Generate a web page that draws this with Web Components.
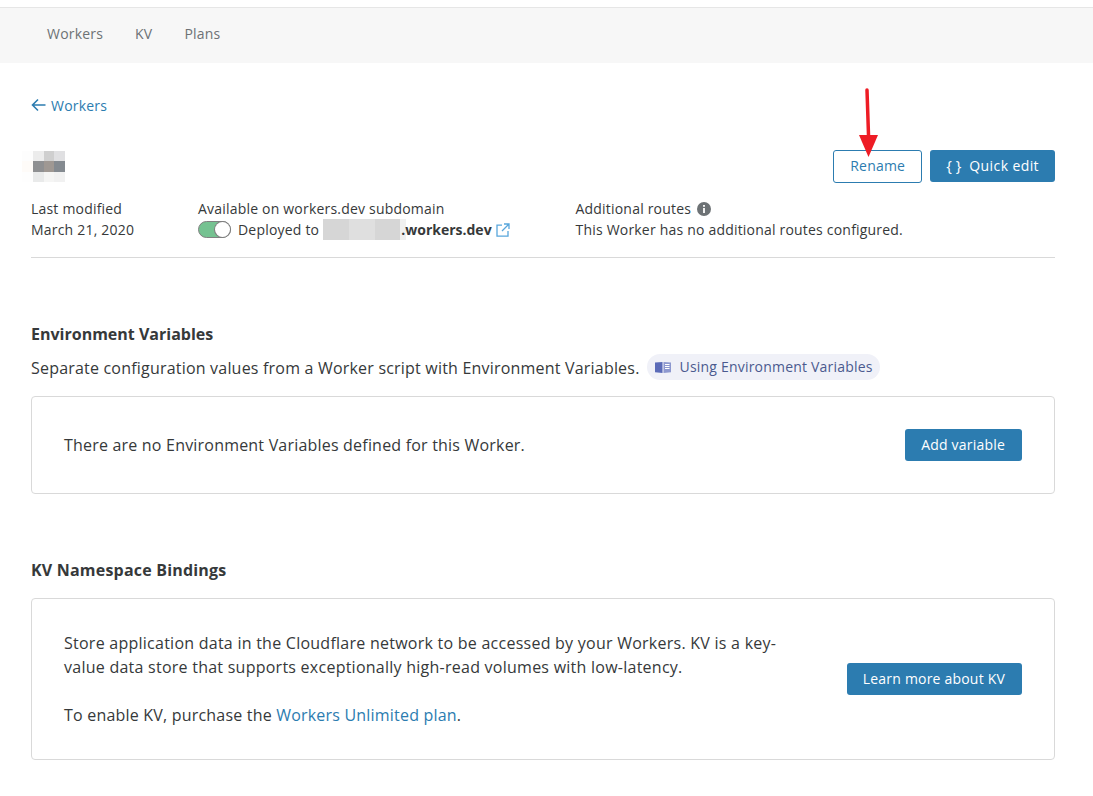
<!DOCTYPE html>
<html lang="en">
<head>
<meta charset="utf-8">
<title>Workers</title>
<style>
    html, body { margin: 0; padding: 0; background: #fff; }
    body { font: 14px/21px "Open Sans", "Liberation Sans", sans-serif; letter-spacing: 0.2px; color: #36393a; }
</style>
</head>
<body>
<cf-nav>
    <a href="#">Workers</a>
    <a href="#">KV</a>
    <a href="#">Plans</a>
</cf-nav>
<cf-page>
    <a class="back" href="#" slot="back">Workers</a>
    <cf-header slot="header"></cf-header>
    <cf-section title="Environment Variables">
        <span slot="intro">Separate configuration values from a Worker script with Environment Variables.</span>
        <cf-pill slot="intro">Using Environment Variables</cf-pill>
        <cf-card>
            <span>There are no Environment Variables defined for this Worker.</span>
            <cf-button slot="action" kind="solid">Add variable</cf-button>
        </cf-card>
    </cf-section>
    <cf-section title="KV Namespace Bindings" class="kv">
        <cf-card tall>
            <cf-kv-text></cf-kv-text>
            <cf-button slot="action" kind="solid">Learn more about KV</cf-button>
        </cf-card>
    </cf-section>
</cf-page>

<script>
    function shadow(el, html) {
        el.attachShadow({ mode: "open" }).innerHTML = html
    }

    class CfNav extends HTMLElement {
        constructor() {
            super()
            shadow(this, `
            <style>
                :host { display: flex; gap: 32px; margin-top: 7px; height: 56px; padding: 0 0 4px 47px; align-items: center;
                    background: #f7f7f7; border-top: 1px solid #e6e6e6; box-sizing: border-box; }
                ::slotted(a) { color: #6d7275; text-decoration: none; }
            </style>
            <slot></slot>`)
        }
    }

    class CfPage extends HTMLElement {
        constructor() {
            super()
            shadow(this, `
            <style>
                :host { display: block; padding: 32px 38px 0 31px; }
                ::slotted(a.back) { display: block; color: #2c7cb0; text-decoration: none; padding-left: 20px; }
                .arrow { position: absolute; left: 31px; top: 98px; }
            </style>
            <svg class="arrow" width="15" height="14" viewBox="0 0 15 14" fill="none" stroke="#2c7cb0" stroke-width="1.6"><path d="M14.500 7H1.500M7 1.500 1.500 7 7 12.500"/></svg>
            <slot name="back"></slot>
            <slot name="header"></slot>
            <slot></slot>`)
        }
    }

    class CfHeader extends HTMLElement {
        constructor() {
            super()
            shadow(this, `
            <style>
                :host { display: block; border-bottom: 1px solid #d9d9d9; padding-bottom: 17px; }
                .top { display: flex; justify-content: space-between; align-items: center; margin-top: 34px; height: 33px; }
                .name { display: grid; grid-template-columns: repeat(4, 10.750px); grid-template-rows: repeat(3, 10.500px); margin-left: -9px; }
                .actions { display: flex; gap: 8px; align-items: flex-start; }
                .meta { display: flex; margin-top: 15px; }
                .meta > div:nth-child(1) { width: 167px; }
                .meta > div:nth-child(2) { width: 377.500px; }
                .row { display: flex; align-items: center; }
                cf-toggle { margin-right: 7px; }
                .blur { display: flex; flex: none; width: 83px; height: 21px; margin-left: 4px; }
                .blur i { flex: 1; }
                .blur i:last-child { flex: 0 0 6px; }
                b { font-weight: 700; letter-spacing: 0; margin-left: -5px; }
                .ext { margin-left: 4px; }
                .info { vertical-align: -2px; margin-left: 2px; }
            </style>
            <div class="top">
                <div class="name">
                    <i style="background:#fdfdfd"></i><i style="background:#ececec"></i><i style="background:#cfcfcf"></i><i style="background:#e0e0e2"></i>
                    <i style="background:#fefbf8"></i><i style="background:#8f9092"></i><i style="background:#9f9893"></i><i style="background:#848a90"></i>
                    <i style="background:#fefefe"></i><i style="background:#e9eaea"></i><i style="background:#f5f5f4"></i><i style="background:#f1f1f1"></i>
                </div>
                <div class="actions">
                    <cf-button kind="outline">Rename</cf-button>
                    <cf-button kind="solid" icon>Quick edit</cf-button>
                </div>
            </div>
            <div class="meta">
                <div>Last modified<br>March 21, 2020</div>
                <div>Available on workers.dev subdomain
                    <div class="row"><cf-toggle></cf-toggle>Deployed to
                        <span class="blur"><i style="background:#d6d6d6"></i><i style="background:#dfdfdf"></i><i style="background:#d6d6d6"></i><i style="background:#f0f0f0"></i></span>
                        <b>.workers.dev</b>
                        <svg class="ext" width="14" height="14" viewBox="0 0 14 14" fill="none" stroke="#58a6dc" stroke-width="1.300"><path d="M6 2.200H1v11h11V8M8 1h5v5M13 1 6 8"/></svg>
                    </div>
                </div>
                <div>Additional routes
                    <svg class="info" width="14" height="14" viewBox="0 0 14 14"><circle cx="7" cy="7" r="7" fill="#6d7275"/><rect x="6.100" y="6" width="1.800" height="5" fill="#fff"/><rect x="6.100" y="3" width="1.800" height="1.800" fill="#fff"/></svg>
                    <br>This Worker has no additional routes configured.
                </div>
            </div>`)
        }
    }

    class CfButton extends HTMLElement {
        constructor() {
            super()
            const icon = this.hasAttribute("icon") ? `<span class="braces">{ }</span>` : ""
            shadow(this, `
            <style>
                :host { display: inline-flex; align-items: center; height: 32px; padding: 0 16px 1px; box-sizing: border-box;
                    border-radius: 3px; white-space: nowrap; }
                :host([kind=solid]) { background: #2c7cb0; color: #fff; }
                :host([kind=outline]) { background: #fff; color: #2c7cb0; border: 1px solid #2c7cb0; height: 33px; padding: 0 16px 2px; }
                :host([icon]) { letter-spacing: 0.400px; padding-bottom: 2px; }
                .braces { margin-right: 8px; font-size: 15px; letter-spacing: 0; }
            </style>
            ${icon}<slot></slot>`)
        }
    }

    class CfToggle extends HTMLElement {
        constructor() {
            super()
            shadow(this, `
            <style>
                :host { display: block; width: 33px; height: 17px; box-sizing: border-box; border-radius: 9px;
                    background: #75c291; border: 1px solid #808080; position: relative; }
                i { position: absolute; right: 0; top: 0; width: 15px; height: 15px; border-radius: 50%; background: #fff; box-shadow: 0 0 0 1px #808080; }
            </style>
            <i></i>`)
        }
    }

    class CfPill extends HTMLElement {
        constructor() {
            super()
            shadow(this, `
            <style>
                :host { display: inline-flex; align-items: center; height: 26px; padding: 0 7px 1px 8px; margin: -2px 0 0 7px; box-sizing: border-box;
                    border-radius: 13px; background: #f0f1f8; color: #4b5a8f; font-size: 14px; }
                svg { margin: 1px 9px 0 0; }
            </style>
            <svg width="16" height="12" viewBox="0 0 16 12"><path d="M0 1.500 7.500 1v11L0 11.200z" fill="#5b6bb8"/><path d="M8.500 1 16 1.500v9.700L8.500 12z" fill="#8d98cf"/><path d="M10 3.500h4.500M10 5.500h4.500M10 7.500h4.500" stroke="#fff"/></svg>
            <slot></slot>`)
        }
    }

    class CfSection extends HTMLElement {
        constructor() {
            super()
            shadow(this, `
            <style>
                :host { display: block; margin-top: 64px; }
                h2 { margin: 0; font-size: 16px; line-height: 24px; font-weight: 700; letter-spacing: 0; color: #36393a; }
                :host(.kv) h2 { letter-spacing: 0.200px; }
                .intro { display: flex; align-items: center; height: 26px; margin: 9px 0 15px; font-size: 16px; }
                :host(.kv) .intro { display: none; }
                :host(.kv) .body { margin-top: 16px; }
            </style>
            <h2>${this.getAttribute("title")}</h2>
            <div class="intro"><slot name="intro"></slot></div>
            <div class="body"><slot></slot></div>`)
        }
    }

    class CfCard extends HTMLElement {
        constructor() {
            super()
            shadow(this, `
            <style>
                :host { display: flex; justify-content: space-between; align-items: center; box-sizing: border-box;
                    height: 98px; padding: 0 32px; border: 1px solid #d9d9d9; border-radius: 4px; font-size: 16px; line-height: 24px; }
                :host([tall]) { height: 162px; }
                ::slotted(cf-button) { font-size: 14px; padding-right: 17px; }
            </style>
            <div><slot></slot></div>
            <slot name="action"></slot>`)
        }
    }

    class CfKvText extends HTMLElement {
        constructor() {
            super()
            shadow(this, `
            <style>
                :host { display: block; width: 730px; letter-spacing: 0.250px; }
                p { margin: 0 0 24px; }
                p:last-child { margin: 0; letter-spacing: 0.200px; }
                a { color: #2c7cb0; text-decoration: none; }
            </style>
            <p>Store application data in the Cloudflare network to be accessed by your Workers. KV is a key-value data store that supports exceptionally high-read volumes with low-latency.</p>
            <p>To enable KV, purchase the <a href="#">Workers Unlimited plan</a>.</p>`)
        }
    }

    class CfRedArrow extends HTMLElement {
        constructor() {
            super()
            shadow(this, `
            <style>
                :host { position: absolute; left: 855px; top: 85px; }
            </style>
            <svg width="30" height="76" viewBox="0 0 30 76"><path d="M12 5 13.500 50" stroke="#ee1c25" stroke-width="3.500" stroke-linecap="round"/><path d="M4 50H23L13.500 72z" fill="#ee1c25"/></svg>`)
        }
    }

    customElements.define("cf-nav", CfNav)
    customElements.define("cf-page", CfPage)
    customElements.define("cf-button", CfButton)
    customElements.define("cf-toggle", CfToggle)
    customElements.define("cf-pill", CfPill)
    customElements.define("cf-header", CfHeader)
    customElements.define("cf-section", CfSection)
    customElements.define("cf-card", CfCard)
    customElements.define("cf-kv-text", CfKvText)
    customElements.define("cf-red-arrow", CfRedArrow)

    document.body.appendChild(document.createElement("cf-red-arrow"))
</script>
</body>
</html>
